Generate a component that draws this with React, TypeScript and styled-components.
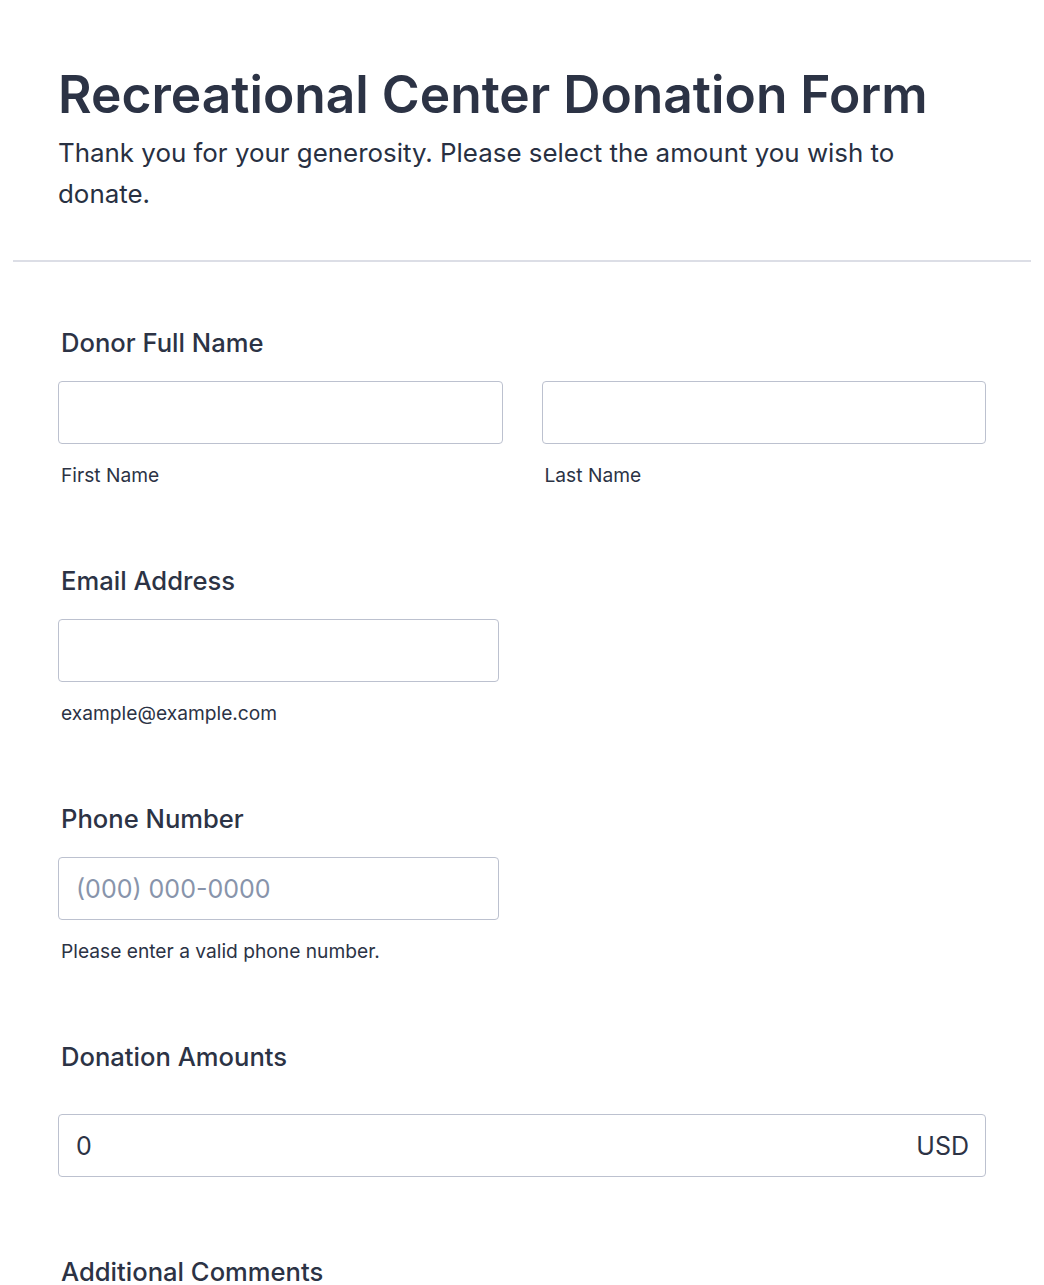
import React from "react";
import styled, { createGlobalStyle } from "styled-components";

const GlobalStyle = createGlobalStyle`
  html, body {
    margin: 0;
    padding: 0;
    background: #ffffff;
  }
  body {
    font-family: Inter, "Noto Sans", "Liberation Sans", sans-serif;
    color: #2c3345;
  }
  * { box-sizing: border-box; }
`;

const Page = styled.div`
  padding: 0 13px;
  width: 1044px;
  height: 1285px;
  overflow: hidden;
`;

const Header = styled.header`
  padding: 64px 45px 46px;
  border-bottom: 2px solid #dcdee6;
`;

const Title = styled.h1`
  margin: 0;
  font-size: 51.5px;
  font-weight: 600;
  line-height: 61px;
  color: #2c3345;
`;

const Subtitle = styled.p`
  margin: 7px 0 0;
  font-size: 25.9px;
  line-height: 41px;
  font-weight: 400;
  max-width: 928px;
  color: #283042;
`;

const Fields = styled.div`
  padding: 26px 45px 0;
  display: flex;
  flex-direction: column;
`;

const Field = styled.section`
  padding: 40px 0;
`;

const Label = styled.label<{ $extra?: number }>`
  display: block;
  padding-left: 3px;
  font-size: 25.6px;
  line-height: 30px;
  font-weight: 500;
  color: #2c3345;
  margin-bottom: ${(p) => 23 + (p.$extra ?? 0)}px;
`;

const Row = styled.div`
  display: flex;
  gap: 39px;
`;

const Cell = styled.div<{ $width?: number }>`
  display: flex;
  flex-direction: column;
  width: ${(p) => (p.$width ? `${p.$width}px` : "100%")};
  flex: ${(p) => (p.$width ? "0 0 auto" : "1 1 0")};
`;

const InputBox = styled.div`
  height: 63px;
  border: 1px solid #bcc1cf;
  border-radius: 4px;
  background: #ffffff;
  display: flex;
  align-items: center;
  justify-content: space-between;
  padding: 0 16px 0 17px;
  font-size: 25px;
  color: #2c3345;
`;

const Placeholder = styled.span`
  color: #8894ab;
`;

const Value = styled.span`
  color: #2c3345;
`;

const SubLabel = styled.span`
  display: block;
  margin-top: 20px;
  padding-left: 3px;
  font-size: 19.2px;
  line-height: 22px;
  color: #2c3345;
`;

export default function App() {
  return (
    <>
      <GlobalStyle />
      <Page>
        <Header>
          <Title>Recreational Center Donation Form</Title>
          <Subtitle>
            Thank you for your generosity. Please select the amount you wish to donate.
          </Subtitle>
        </Header>
        <Fields>
          <Field>
            <Label>Donor Full Name</Label>
            <Row>
              <Cell>
                <InputBox />
                <SubLabel>First Name</SubLabel>
              </Cell>
              <Cell>
                <InputBox />
                <SubLabel>Last Name</SubLabel>
              </Cell>
            </Row>
          </Field>
          <Field>
            <Label>Email Address</Label>
            <Cell $width={441}>
              <InputBox />
              <SubLabel>example@example.com</SubLabel>
            </Cell>
          </Field>
          <Field>
            <Label>Phone Number</Label>
            <Cell $width={441}>
              <InputBox>
                <Placeholder>(000) 000-0000</Placeholder>
              </InputBox>
              <SubLabel>Please enter a valid phone number.</SubLabel>
            </Cell>
          </Field>
          <Field>
            <Label $extra={19}>Donation Amounts</Label>
            <Cell>
              <InputBox>
                <Value>0</Value>
                <Value>USD</Value>
              </InputBox>
            </Cell>
          </Field>
          <Field>
            <Label>Additional Comments</Label>
          </Field>
        </Fields>
      </Page>
    </>
  );
}
